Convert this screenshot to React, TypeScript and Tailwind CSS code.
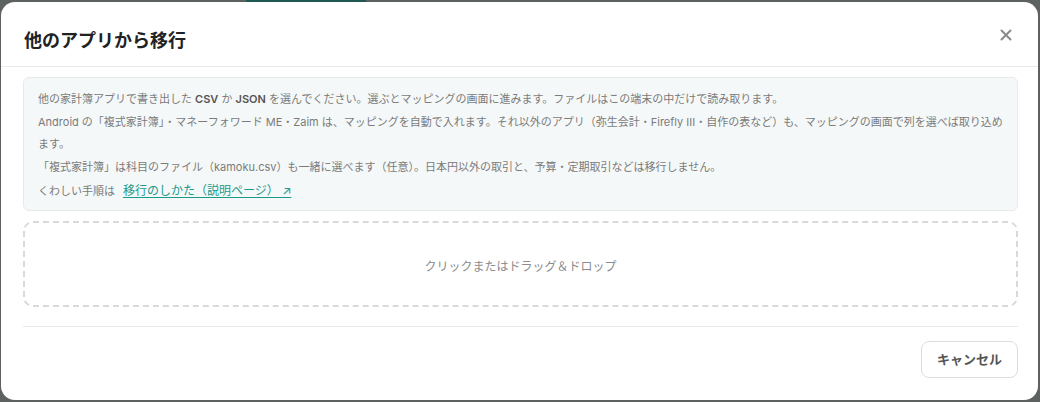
import React from "react";

export default function App() {
  return (
    <div
      className="w-[1040px] h-[402px] bg-[#5d6160] flex flex-col overflow-hidden"
      style={{ fontFamily: 'Inter, "Noto Sans CJK JP", sans-serif' }}
    >
      <div className="h-[2px] flex shrink-0">
        <div className="ml-[246px] w-[120px] h-[2px] bg-[#1f5a52]" />
      </div>
      <div className="relative ml-[1px] w-[1037px] h-[398px] bg-white rounded-[14px] flex flex-col">
        <div className="pl-[23px] pr-[22px] pt-[25px] pb-[11px] border-b border-[#e8ebeb]">
          <h2 className="text-[18px] leading-[28px] font-bold text-[#222]">他のアプリから移行</h2>
        </div>
        <button className="absolute right-[24px] top-[25px] w-[16px] h-[16px] flex items-center justify-center text-[#8a8a8a]">
          <svg width="12" height="12" viewBox="0 0 12 12" fill="none" stroke="currentColor" strokeWidth="2" strokeLinecap="round">
            <path d="M1.5 1.5 L10.5 10.5 M10.5 1.5 L1.5 10.5" />
          </svg>
        </button>
        <div className="pl-[22px] pr-[20px] pt-[10px]">
          <div className="rounded-[6px] border border-[#e6eaea] bg-[#f5f8f8] pl-[14px] pr-[9px] pt-[10px] pb-[8px] text-[11px] leading-[22px] text-[#7b7b7b] flex flex-col gap-[1px]">
            <p>
              他の家計簿アプリで書き出した <span className="font-semibold text-[#555]">CSV</span> か{" "}
              <span className="font-semibold text-[#555]">JSON</span> を選んでください。選ぶとマッピングの画面に進みます。ファイルはこの端末の中だけで読み取ります。
            </p>
            <p>
              Android の「複式家計簿」・マネーフォワード ME・Zaim は、マッピングを自動で入れます。それ以外のアプリ（弥生会計・Firefly III・自作の表など）も、マッピングの画面で列を選べば取り込めます。
            </p>
            <p>
              「複式家計簿」は科目のファイル（kamoku.csv）も一緒に選べます（任意）。日本円以外の取引と、予算・定期取引などは移行しません。
            </p>
            <p className="mt-[1px]">
              くわしい手順は
              <a className="ml-[8px] text-[#1a9a8a] underline underline-offset-2 text-[12px]">
                移行のしかた（説明ページ） ↗
              </a>
            </p>
          </div>
          <div className="mt-[10px] h-[86px] pt-[6px] rounded-[10px] border-2 border-dashed border-[#d8dada] flex items-center justify-center text-[12px] text-[#8c8c8c]">
            クリックまたはドラッグ＆ドロップ
          </div>
          <div className="mt-[19px] border-t border-[#e8ebeb]" />
          <div className="mt-[14px] flex justify-end">
            <button className="w-[97px] h-[37px] rounded-[8px] border border-[#dcdede] bg-white text-[13px] font-bold text-[#555]">
              キャンセル
            </button>
          </div>
        </div>
      </div>
    </div>
  );
}
